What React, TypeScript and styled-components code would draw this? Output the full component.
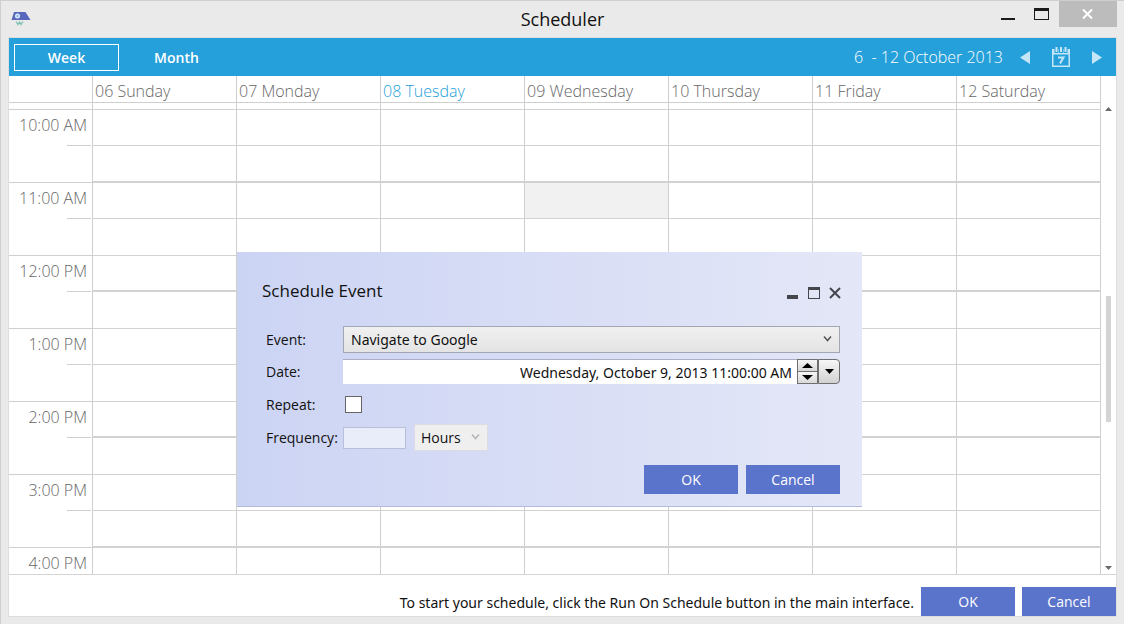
import React from "react";
import styled, { createGlobalStyle } from "styled-components";

const GlobalStyle = createGlobalStyle`
  *, *::before, *::after { box-sizing: border-box; }
  body { margin: 0; background: #eaeaea; }
  body, button, input, select, textarea {
    font-family: "Noto Sans", "Open Sans", sans-serif;
    font-size: 14px;
    color: #111;
  }
`;

const headingFont = `"Open Sans", "Noto Sans", sans-serif`;

const Window = styled.div`
  display: flex;
  flex-direction: column;
  height: 100vh;
  padding: 0 8px 8px;
  background: #eaeaea;
  border: 1px solid #cfcfcf;
  border-right: 0;
  border-bottom: 0;
`;

const TitleBar = styled.header`
  display: grid;
  grid-template-columns: 1fr auto 1fr;
  height: 37px;
  flex: none;
`;

const AppIcon = styled.svg`
  margin: 10px 0 0 2px;
`;

const WindowTitle = styled.h1`
  margin: 0;
  font-family: ${headingFont};
  font-size: 18px;
  line-height: 37px;
  font-weight: 400;
`;

const WindowControls = styled.div`
  display: flex;
  justify-content: flex-end;
  height: 26px;
  margin-right: -1px;
`;

const CaptionButton = styled.button<{ $close?: boolean }>`
  display: flex;
  align-items: center;
  justify-content: center;
  width: ${(p) => (p.$close ? 58 : 34)}px;
  padding: 0;
  border: 0;
  background: ${(p) => (p.$close ? "#bcbcbc" : "transparent")};
`;

const Client = styled.main`
  display: flex;
  flex-direction: column;
  flex: 1;
  min-height: 0;
  background: #fff;
  box-shadow: 0 0 0 1px #dedede;
`;

const Toolbar = styled.nav`
  display: flex;
  align-items: center;
  justify-content: space-between;
  height: 38px;
  flex: none;
  padding: 0 14px 0 5px;
  background: #26a0da;
`;

const Views = styled.div`
  display: flex;
  gap: 5px;
`;

const ViewButton = styled.button<{ $active?: boolean }>`
  width: 105px;
  height: 27px;
  padding: 0;
  border: 1px solid ${(p) => (p.$active ? "#fff" : "transparent")};
  background: transparent;
  color: #fff;
  font-family: ${headingFont};
  font-weight: 600;
  line-height: 25px;
`;

const Period = styled.div`
  display: flex;
  align-items: center;
  color: #fff;
  font-family: ${headingFont};
  font-size: 16px;
  font-weight: 300;
  white-space: pre;
`;

const ToolButton = styled.button`
  display: flex;
  align-items: center;
  justify-content: center;
  padding: 0;
  border: 0;
  background: transparent;
`;

const Pager = styled.div`
  display: flex;
  align-items: center;
  gap: 22px;
  margin-left: 17px;
`;

const Schedule = styled.section`
  display: flex;
  flex: 1;
  min-height: 0;
  overflow: hidden;
  border-bottom: 1px solid #d4d4d4;
`;

const CalendarPane = styled.div`
  flex: 1;
  min-width: 0;
`;

const Calendar = styled.table`
  width: 100%;
  border-spacing: 0;
  table-layout: fixed;
  font-family: ${headingFont};
`;

const TimeColumn = styled.col`
  width: 84px;
`;

const DayHeader = styled.th<{ $today?: boolean }>`
  height: 27px;
  padding: 4px 0 0 2px;
  border-right: 1px solid #cfcfcf;
  border-bottom: 1px solid #cfcfcf;
  color: ${(p) => (p.$today ? "#26a0da" : "#666")};
  font-size: 16px;
  line-height: 22px;
  font-weight: 300;
  text-align: left;
  vertical-align: top;
  white-space: nowrap;
`;

const TimeCell = styled.th<{ $half?: boolean }>`
  position: relative;
  padding: 3px 5px 0 0;
  border-right: 1px solid #cfcfcf;
  border-bottom: ${(p) => (p.$half ? "1px solid #cfcfcf" : "0")};
  color: #666;
  font-size: 16px;
  line-height: 24px;
  font-weight: 300;
  text-align: right;
  vertical-align: top;
  white-space: nowrap;

  &::after {
    content: "";
    display: ${(p) => (p.$half ? "none" : "block")};
    position: absolute;
    right: 1px;
    bottom: 0;
    width: 24px;
    height: 1px;
    background: #cfcfcf;
  }
`;

const Row = styled.tr<{ $height: number }>`
  height: ${(p) => p.$height}px;
`;

const Slot = styled.td<{ $selected?: boolean; $strong?: boolean }>`
  padding: 0;
  border-right: 1px solid #cfcfcf;
  border-bottom: ${(p) => (p.$strong ? 2 : 1)}px solid #d2d2d2;
  background: ${(p) => (p.$selected ? "#f1f1f1" : "transparent")};
`;

const Scrollbar = styled.div`
  display: flex;
  flex-direction: column;
  align-items: center;
  width: 15px;
  flex: none;
  padding: 31px 0 4px;
`;

const ScrollTrack = styled.div`
  display: flex;
  flex: 1;
  flex-direction: column;
`;

const ScrollSpace = styled.div<{ $grow: number }>`
  flex: ${(p) => p.$grow} 0 0;
`;

const ScrollThumb = styled.div`
  flex: 125 0 0;
  width: 5px;
  background: #d4d4d4;
`;

const Footer = styled.footer`
  display: flex;
  align-items: flex-end;
  justify-content: flex-end;
  gap: 7px;
  height: 41px;
  flex: none;
`;

const Hint = styled.p`
  margin: 0;
  line-height: 27px;
`;

const ActionButton = styled.button`
  width: 94px;
  height: 29px;
  padding: 0;
  border: 0;
  background: #5b74cb;
  color: #fff;
  font-family: ${headingFont};
  line-height: 29px;
`;

const Dialog = styled.form`
  position: absolute;
  top: 252px;
  left: 50%;
  width: 625px;
  height: 255px;
  margin-left: -325px;
  padding: 26px 22px 0 25px;
  border-bottom: 1px solid #b4bbdd;
  background: linear-gradient(90deg, #ccd4f4, #e4e7f7);
`;

const DialogHeader = styled.div`
  display: flex;
  align-items: center;
  justify-content: space-between;
  height: 26px;
  margin-bottom: 22px;
`;

const DialogTitle = styled.h2`
  margin: 0;
  font-family: ${headingFont};
  font-size: 17px;
  line-height: 26px;
  font-weight: 400;
`;

const DialogControls = styled.div`
  display: flex;
  gap: 9px;
  margin: 4px -1px 0 0;
`;

const Field = styled.div<{ $height: number }>`
  display: flex;
  align-items: center;
  height: ${(p) => p.$height}px;
  margin-bottom: 5px;
  padding-left: 4px;
`;

const Label = styled.label`
  width: 77px;
  flex: none;
  font-family: ${headingFont};
  line-height: 20px;
`;

const SelectBox = styled.div<{ $disabled?: boolean }>`
  position: relative;
  flex: ${(p) => (p.$disabled ? "none" : "1")};
  width: ${(p) => (p.$disabled ? "74px" : "auto")};
  height: 27px;
`;

const Select = styled.select`
  appearance: none;
  width: 100%;
  height: 100%;
  padding: 0 6px 0 7px;
  border: 1px solid #a3a7b4;
  border-radius: 0;
  background: linear-gradient(#f0f0f0, #e4e4e4);
  opacity: 1;

  &:disabled {
    padding-left: 6px;
    border-color: #dcdde2;
    background: #efefef;
    color: #111;
    font-family: ${headingFont};
  }
`;

const SelectArrow = styled.svg`
  position: absolute;
  right: 8px;
  top: 9px;
  pointer-events: none;
`;

const DateBox = styled.div`
  display: flex;
  flex: 1;
  height: 25px;
`;

const DateInput = styled.input`
  flex: 1;
  min-width: 0;
  padding: 1px 5px 0;
  border: 0;
  border-top: 1px solid #a9aec4;
  background: #fff;
  text-align: right;
`;

const Spinner = styled.div`
  display: flex;
  flex-direction: column;
  width: 21px;
  border: 1px solid #6f6f6f;
`;

const SpinButton = styled.button`
  display: flex;
  flex: 1;
  align-items: center;
  justify-content: center;
  padding: 0;
  border: 0;
  background: linear-gradient(#f6f6f6, #d8d8d8);

  & + & { border-top: 1px solid #6f6f6f; }
`;

const DropButton = styled.button`
  display: flex;
  align-items: center;
  justify-content: center;
  width: 22px;
  padding: 0;
  border: 1px solid #6f6f6f;
  border-radius: 0 4px 4px 0;
  background: linear-gradient(#f6f6f6, #d2d2d2);
`;

const Checkbox = styled.input`
  appearance: none;
  width: 17px;
  height: 17px;
  margin: 0 0 0 2px;
  border: 1px solid #666;
  background: #fff;
`;

const FrequencyInput = styled.input`
  width: 63px;
  height: 22px;
  margin-right: 8px;
  border: 1px solid #b9bfd8;
  background: #e9ecf9;
`;

const DialogActions = styled.div`
  display: flex;
  justify-content: flex-end;
  gap: 8px;
  margin-top: 14px;
`;

const days = ["06 Sunday", "07 Monday", "08 Tuesday", "09 Wednesday", "10 Thursday", "11 Friday", "12 Saturday"];
const hours = ["10:00 AM", "11:00 AM", "12:00 PM", "1:00 PM", "2:00 PM", "3:00 PM", "4:00 PM"];
const strongRows = new Set([1, 4, 8, 11]);

function Triangle({ w, h, dir, fill }: { w: number; h: number; dir: "up" | "down" | "left" | "right"; fill: string }) {
  const points = {
    up: `0,${h} ${w},${h} ${w / 2},0`,
    down: `0,0 ${w},0 ${w / 2},${h}`,
    left: `${w},0 ${w},${h} 0,${h / 2}`,
    right: `0,0 0,${h} ${w},${h / 2}`,
  }[dir];
  return (
    <svg width={w} height={h} aria-hidden="true">
      <polygon points={points} fill={fill} />
    </svg>
  );
}

function HourRows({ label, index }: { label: string; index: number }) {
  const selected = (day: number) => label === "11:00 AM" && day === 3;
  return (
    <>
      <Row $height={36}>
        <TimeCell scope="row">{label}</TimeCell>
        {days.map((d, i) => (
          <Slot key={d} $selected={selected(i)} $strong={strongRows.has(index * 2)} />
        ))}
      </Row>
      <Row $height={37}>
        <TimeCell as="td" $half />
        {days.map((d) => (
          <Slot key={d} $strong={strongRows.has(index * 2 + 1)} />
        ))}
      </Row>
    </>
  );
}

export default function App() {
  return (
    <Window>
      <GlobalStyle />
      <TitleBar>
        <AppIcon width="20" height="16" viewBox="0 0 20 16" aria-hidden="true">
          <path d="M3 1H14.500L19.500 9H0.500Z" fill="#5968bd" />
          <circle cx="6.500" cy="5" r="2.500" fill="#d9ecff" />
          <circle cx="6.500" cy="5" r="1" fill="#6fa6dd" />
          <path d="M5 10.500L7 13.500L8.500 11L10 13.500L12 10.500" fill="none" stroke="#7fc0b4" strokeWidth="1.300" />
        </AppIcon>
        <WindowTitle>Scheduler</WindowTitle>
        <WindowControls>
          <CaptionButton aria-label="Minimize">
            <svg width="14" height="12"><path d="M0 10h14v2H0z" fill="#1c1a1c" /></svg>
          </CaptionButton>
          <CaptionButton aria-label="Maximize">
            <svg width="16" height="12"><path d="M0 0h15v12H0zM1 3v8h13V3z" fill="#1c1a1c" fillRule="evenodd" /></svg>
          </CaptionButton>
          <CaptionButton $close aria-label="Close">
            <svg width="12" height="10"><path d="M1 0.500L10 9.500M10 0.500L1 9.500" stroke="#fff" strokeWidth="2" /></svg>
          </CaptionButton>
        </WindowControls>
      </TitleBar>
      <Client>
        <Toolbar>
          <Views>
            <ViewButton $active>Week</ViewButton>
            <ViewButton>Month</ViewButton>
          </Views>
          <Period>
            <span>{"6  - 12 October 2013"}</span>
            <Pager>
              <ToolButton aria-label="Previous week"><Triangle w={10} h={13} dir="left" fill="#c4e6f7" /></ToolButton>
              <ToolButton aria-label="Today">
                <svg width="18" height="20" viewBox="0 0 18 20">
                  <path d="M0 2h2.500v4h4V2h0.500v4h4V2h0.500v4h4V2H18v18H0zM1.500 7.500v11h15v-11z" fill="#c4e6f7" fillRule="evenodd" />
                  <path d="M3.500 0h2v5h-2zM8 0h2v5H8zM12.500 0h2v5h-2z" fill="#c4e6f7" />
                  <path d="M6 10.500h5.500L8 16.500" fill="none" stroke="#c4e6f7" strokeWidth="2" />
                </svg>
              </ToolButton>
              <ToolButton aria-label="Next week"><Triangle w={10} h={13} dir="right" fill="#c4e6f7" /></ToolButton>
            </Pager>
          </Period>
        </Toolbar>
        <Schedule>
          <CalendarPane>
            <Calendar>
              <colgroup>
                <TimeColumn />
                {days.map((d) => <col key={d} />)}
              </colgroup>
              <thead>
                <tr>
                  <DayHeader as="td" />
                  {days.map((d, i) => (
                    <DayHeader key={d} scope="col" $today={i === 2}>{d}</DayHeader>
                  ))}
                </tr>
              </thead>
              <tbody>
                <Row $height={7}>
                  <TimeCell as="td" $half />
                  {days.map((d) => <Slot key={d} />)}
                </Row>
                {hours.map((h, i) => <HourRows key={h} label={h} index={i} />)}
              </tbody>
            </Calendar>
          </CalendarPane>
          <Scrollbar>
            <Triangle w={7} h={4} dir="up" fill="#6b6b6b" />
            <ScrollTrack>
              <ScrollSpace $grow={185} />
              <ScrollThumb />
              <ScrollSpace $grow={144} />
            </ScrollTrack>
            <Triangle w={7} h={4} dir="down" fill="#6b6b6b" />
          </Scrollbar>
        </Schedule>
        <Footer>
          <Hint>To start your schedule, click the Run On Schedule button in the main interface.</Hint>
          <ActionButton>OK</ActionButton>
          <ActionButton>Cancel</ActionButton>
        </Footer>
      </Client>
      <Dialog role="dialog" aria-labelledby="dialog-title" onSubmit={(e) => e.preventDefault()}>
        <DialogHeader>
          <DialogTitle id="dialog-title">Schedule Event</DialogTitle>
          <DialogControls>
            <ToolButton type="button" aria-label="Minimize">
              <svg width="12" height="12"><path d="M0 8h11v4H0z" fill="#45454d" /></svg>
            </ToolButton>
            <ToolButton type="button" aria-label="Maximize">
              <svg width="12" height="12"><path d="M0 0h12v12H0zM1 3v8h10V3z" fill="#45454d" fillRule="evenodd" /></svg>
            </ToolButton>
            <ToolButton type="button" aria-label="Close">
              <svg width="12" height="12"><path d="M1 1L11 11M11 1L1 11" stroke="#45454d" strokeWidth="2" /></svg>
            </ToolButton>
          </DialogControls>
        </DialogHeader>
        <Field $height={27}>
          <Label htmlFor="event">Event:</Label>
          <SelectBox>
            <Select id="event" defaultValue="google"><option value="google">Navigate to Google</option></Select>
            <SelectArrow width="9" height="8"><path d="M1 1.500L4.500 5.500L8 1.500" fill="none" stroke="#555" strokeWidth="1.500" /></SelectArrow>
          </SelectBox>
        </Field>
        <Field $height={27}>
          <Label htmlFor="date">Date:</Label>
          <DateBox>
            <DateInput id="date" defaultValue="Wednesday, October 9, 2013 11:00:00 AM" />
            <Spinner>
              <SpinButton type="button" aria-label="Later"><Triangle w={11} h={5} dir="up" fill="#000" /></SpinButton>
              <SpinButton type="button" aria-label="Earlier"><Triangle w={11} h={5} dir="down" fill="#000" /></SpinButton>
            </Spinner>
            <DropButton type="button" aria-label="Open calendar"><Triangle w={9} h={5} dir="down" fill="#000" /></DropButton>
          </DateBox>
        </Field>
        <Field $height={29}>
          <Label htmlFor="repeat">Repeat:</Label>
          <Checkbox id="repeat" type="checkbox" />
        </Field>
        <Field $height={27}>
          <Label htmlFor="frequency">Frequency:</Label>
          <FrequencyInput id="frequency" disabled />
          <SelectBox $disabled>
            <Select aria-label="Frequency unit" disabled><option>Hours</option></Select>
            <SelectArrow width="9" height="8"><path d="M1 1.500L4.500 5.500L8 1.500" fill="none" stroke="#b5b5b5" strokeWidth="1.500" /></SelectArrow>
          </SelectBox>
        </Field>
        <DialogActions>
          <ActionButton>OK</ActionButton>
          <ActionButton type="button">Cancel</ActionButton>
        </DialogActions>
      </Dialog>
    </Window>
  );
}
